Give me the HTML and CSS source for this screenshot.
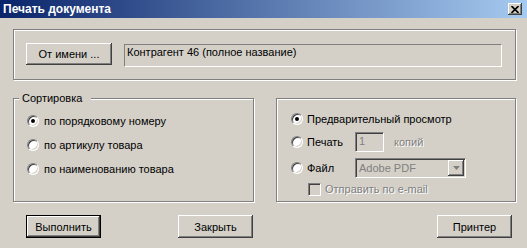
FILE: index.html
```html
<!DOCTYPE html>
<html lang="ru">
<head>
    <meta charset="UTF-8">
    <title>Печать документа</title>
    <link rel="stylesheet" href="styles.css">
</head>
<body>
    <div class="window">
        <div class="titlebar">
            <span class="title">Печать документа</span>
            <div class="close-btn">
                <svg width="8" height="7" viewBox="0 0 8 7">
                    <path d="M0.5 0 L7.5 7 M7.5 0 L0.5 7" stroke="#000" stroke-width="1.6" fill="none"/>
                </svg>
            </div>
        </div>

        <div class="content">
            <div class="group top-group">
                <div class="button from-btn">От имени ...</div>
                <div class="static-field">Контрагент 46 (полное название)</div>
            </div>

            <div class="groups-row">
                <div class="group sort-group">
                    <span class="legend">Сортировка</span>
                    <div class="option"><span class="radio checked"></span>по порядковому номеру</div>
                    <div class="option"><span class="radio"></span>по артикулу товара</div>
                    <div class="option"><span class="radio"></span>по наименованию товара</div>
                </div>

                <div class="group output-group">
                    <div class="out-row row-preview">
                        <span class="radio checked"></span>
                        <span class="out-label">Предварительный просмотр</span>
                    </div>
                    <div class="out-row row-print">
                        <span class="radio"></span>
                        <span class="out-label fixed">Печать</span>
                        <div class="spin disabled">1</div>
                        <span class="disabled-text copies">копий</span>
                    </div>
                    <div class="out-row row-file">
                        <span class="radio"></span>
                        <span class="out-label fixed">Файл</span>
                        <div class="combo disabled">
                            <span class="combo-text">Adobe PDF</span>
                            <span class="combo-arrow">
                                <svg width="7" height="4" viewBox="0 0 7 4">
                                    <path d="M0 0 H7 L3.5 4 Z" fill="#808080"/>
                                </svg>
                            </span>
                        </div>
                    </div>
                    <div class="out-row row-mail">
                        <span class="checkbox"></span>
                        <span class="disabled-text">Отправить по e-mail</span>
                    </div>
                </div>
            </div>

            <div class="actions">
                <div class="button default-btn">Выполнить</div>
                <div class="button close-action">Закрыть</div>
                <div class="button printer-btn">Принтер</div>
            </div>
        </div>
    </div>
</body>
</html>
```

FILE: styles.css
```css
body {
    margin: 0;
    padding: 0;
    font-family: 'Liberation Sans', Arial, sans-serif;
    font-size: 11px;
    color: #000;
}

.window {
    width: 527px;
    height: 248px;
    background-color: #d4d0c8;
    overflow: hidden;
}

/* заголовок окна */
.titlebar {
    height: 18px;
    display: flex;
    align-items: center;
    padding: 0 5px 0 3px;
    background: linear-gradient(to right, #0a246a, #a6caf0);
}

.title {
    flex: 1;
    color: #fff;
    font-weight: bold;
    font-size: 12px;
}

.close-btn {
    width: 14px;
    height: 12px;
    display: flex;
    align-items: center;
    justify-content: center;
    background-color: #d4d0c8;
    box-shadow: inset -1px -1px #404040, inset 1px 1px #fff, inset -2px -2px #808080;
}

.content {
    padding: 11px 11px 0 13px;
}

/* рамки групп */
.group {
    box-sizing: border-box;
    border: 1px solid #808080;
    box-shadow: 1px 1px 0 #fff, inset 1px 1px 0 #fff;
    position: relative;
}

.top-group {
    height: 51px;
    display: flex;
    align-items: flex-start;
    padding: 13px 13px 0 12px;
}

.button {
    box-sizing: border-box;
    width: 75px;
    height: 23px;
    display: flex;
    align-items: center;
    justify-content: center;
    background-color: #d4d0c8;
    box-shadow: inset -1px -1px #404040, inset 1px 1px #fff, inset -2px -2px #808080;
}

.from-btn {
    width: 86px;
    height: 22px;
    margin-right: 12px;
}

.static-field {
    box-sizing: border-box;
    flex: 1;
    height: 23px;
    margin-top: 1px;
    padding: 1px 2px 0;
    border-top: 1px solid #808080;
    border-left: 1px solid #808080;
    border-bottom: 1px solid #fff;
    border-right: 1px solid #fff;
}

.groups-row {
    display: flex;
    gap: 22px;
    margin-top: 18px;
    height: 104px;
}

.sort-group {
    width: 241px;
    padding: 14px 0 0 13px;
}

.output-group {
    width: 240px;
    padding: 12px 0 0 14px;
}

.legend {
    position: absolute;
    top: -8px;
    left: 5px;
    padding: 0 9px 0 3px;
    line-height: 14px;
    background-color: #d4d0c8;
}

.option {
    height: 16px;
    display: flex;
    align-items: center;
    gap: 5px;
    margin-bottom: 8px;
}

/* радиокнопки */
.radio {
    box-sizing: border-box;
    width: 12px;
    height: 12px;
    flex: none;
    border-radius: 50%;
    background-color: #fff;
    border: 1px solid;
    border-color: #808080 #fff #fff #808080;
    box-shadow: inset 1px 1px #404040, inset -1px -1px #d4d0c8;
    position: relative;
}

.radio.checked::after {
    content: '';
    position: absolute;
    left: 3px;
    top: 3px;
    width: 4px;
    height: 4px;
    border-radius: 50%;
    background-color: #000;
}

.out-row {
    display: flex;
    align-items: center;
}

.out-row .radio {
    margin-right: 4px;
}

.row-preview {
    height: 16px;
}

.row-print {
    height: 20px;
    margin-top: 5px;
}

.row-file {
    height: 20px;
    margin-top: 6px;
}

.row-mail {
    height: 14px;
    margin-top: 4px;
    padding-left: 17px;
}

.fixed {
    width: 48px;
}

.spin,
.combo {
    box-sizing: border-box;
    height: 20px;
    border: 1px solid;
    border-color: #808080 #fff #fff #808080;
    box-shadow: inset 1px 1px #404040, inset -1px -1px #d4d0c8;
    background-color: #d4d0c8;
    color: #808080;
}

.spin {
    width: 29px;
    padding: 2px 0 0 3px;
}

.combo {
    width: 111px;
    display: flex;
    align-items: center;
    justify-content: space-between;
    padding: 0 1px 0 3px;
}

.combo-arrow {
    box-sizing: border-box;
    width: 16px;
    height: 16px;
    display: flex;
    align-items: center;
    justify-content: center;
    box-shadow: inset -1px -1px #404040, inset 1px 1px #fff, inset -2px -2px #808080;
}

.disabled-text {
    color: #808080;
    text-shadow: 1px 1px 0 #fff;
}

.copies {
    margin-left: 10px;
}

.checkbox {
    box-sizing: border-box;
    width: 13px;
    height: 13px;
    margin-right: 4px;
    border: 1px solid;
    border-color: #808080 #fff #fff #808080;
    box-shadow: inset 1px 1px #404040, inset -1px -1px #d4d0c8;
    background-color: #d4d0c8;
}

/* кнопки внизу */
.actions {
    display: flex;
    margin-top: 13px;
}

.default-btn {
    margin-left: 13px;
    border: 1px solid #000;
}

.close-action {
    margin-left: 77px;
}

.printer-btn {
    margin-left: auto;
    margin-right: 4px;
}
```
